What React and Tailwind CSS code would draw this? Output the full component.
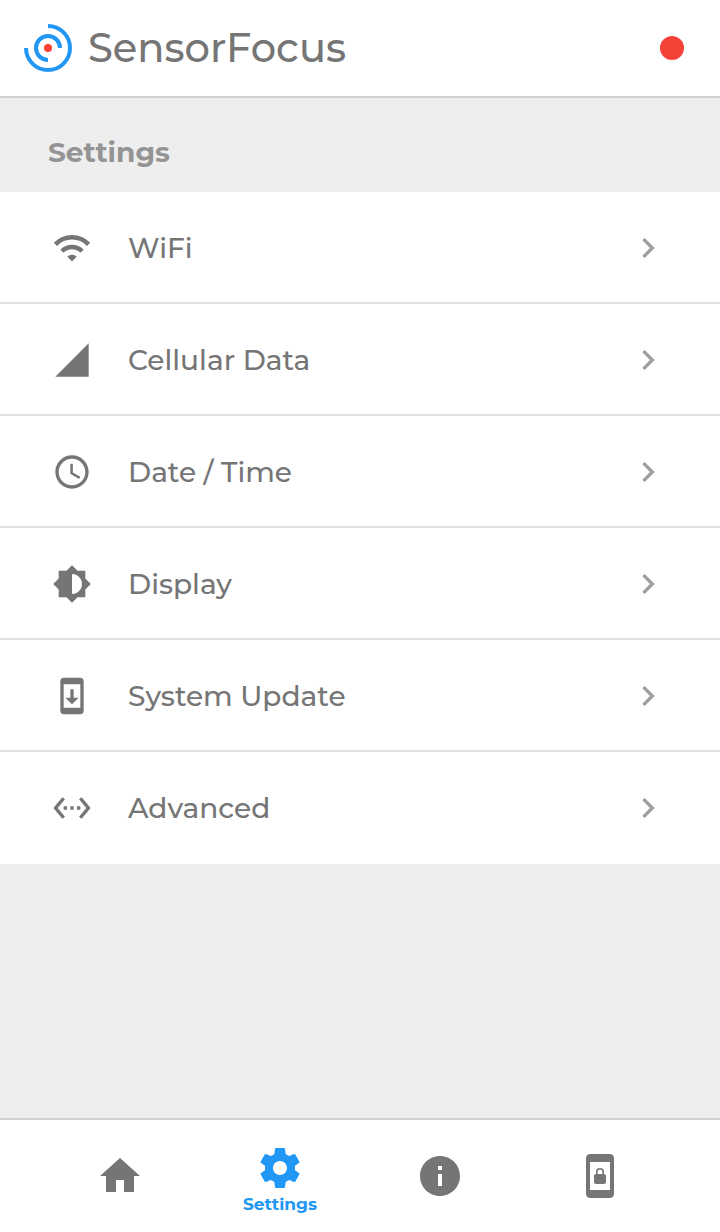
import {
  MdAccessTime,
  MdBrightness6,
  MdChevronRight,
  MdHome,
  MdInfo,
  MdScreenLockPortrait,
  MdSettingsEthernet,
  MdSignalCellular4Bar,
  MdSystemUpdate,
} from "react-icons/md";

function WifiIcon({ className }) {
  return (
    <svg viewBox="0 0 40 40" className={className} fill="none" stroke="currentColor" strokeWidth="4.5" aria-hidden="true">
      <path d="M3.4 16.4a23 23 0 0 1 33.2 0" />
      <path d="M9.9 23.2a14 14 0 0 1 20.2 0" />
      <path d="M15.3 28.6a6.6 6.6 0 0 1 9.4 0L20 33.4z" fill="currentColor" stroke="none" />
    </svg>
  );
}

function GearIcon({ className }) {
  return (
    <svg viewBox="0 0 24 24" className={className} fill="currentColor" aria-hidden="true">
      <path d="M19.43 12.98c.04-.32.07-.64.07-.98s-.03-.66-.07-.98l2.11-1.65c.19-.15.24-.42.12-.64l-2-3.46c-.12-.22-.39-.3-.61-.22l-2.49 1c-.52-.4-1.08-.73-1.69-.98l-.38-2.65C14.46 2.18 14.25 2 14 2h-4c-.25 0-.46.18-.49.42l-.38 2.65c-.61.25-1.17.59-1.69.98l-2.49-1c-.23-.09-.49 0-.61.22l-2 3.46c-.13.22-.07.49.12.64l2.11 1.65c-.04.32-.07.65-.07.98s.03.66.07.98l-2.11 1.65c-.19.15-.24.42-.12.64l2 3.46c.12.22.39.3.61.22l2.49-1c.52.4 1.08.73 1.69.98l.38 2.65c.03.24.24.42.49.42h4c.25 0 .46-.18.49-.42l.38-2.65c.61-.25 1.17-.59 1.69-.98l2.49 1c.23.09.49 0 .61-.22l2-3.46c.12-.22.07-.49-.12-.64l-2.11-1.65zM12 15.5c-1.93 0-3.5-1.57-3.5-3.5s1.57-3.5 3.5-3.5 3.5 1.57 3.5 3.5-1.57 3.5-3.5 3.5z" />
    </svg>
  );
}

function Logo() {
  return (
    <svg viewBox="0 0 48 48" className="size-12 shrink-0" fill="none" stroke="#2196f3" strokeWidth="4" aria-hidden="true">
      <path d="M24 2a22 22 0 1 1-22 22" />
      <path d="M24 36a12 12 0 1 1 12-12" />
      <circle cx="24" cy="24" r="4" fill="#f44336" stroke="none" />
    </svg>
  );
}

const rows = [
  { label: "WiFi", Icon: WifiIcon },
  { label: "Cellular Data", Icon: MdSignalCellular4Bar },
  { label: "Date / Time", Icon: MdAccessTime },
  { label: "Display", Icon: MdBrightness6 },
  { label: "System Update", Icon: MdSystemUpdate },
  { label: "Advanced", Icon: MdSettingsEthernet },
];

const tabs = [
  { label: "Home", Icon: MdHome },
  { label: "Settings", Icon: GearIcon, active: true },
  { label: "Information", Icon: MdInfo },
  { label: "Lock screen", Icon: MdScreenLockPortrait },
];

export default function App() {
  return (
    <div className="flex min-h-screen flex-col bg-[#eeeeee] font-['Montserrat','Inter',sans-serif] text-[#757575]">
      <header className="flex items-center justify-between border-b-2 border-[#d0d0d0] bg-white py-6 pr-9 pl-6">
        <div className="flex items-center gap-4">
          <Logo />
          <h1 className="text-[40px] leading-12 font-medium">SensorFocus</h1>
        </div>
        <span role="status" aria-label="Disconnected" className="size-6 rounded-full bg-[#f44336]" />
      </header>

      <main className="flex-1">
        <h2 className="px-12 pt-[38px] pb-6 text-[28px] leading-8 font-bold text-[#949494]">Settings</h2>
        <ul className="bg-white">
          {rows.map(({ label, Icon }) => (
            <li key={label} className="group">
              <button
                type="button"
                className="flex h-28 w-full items-center border-b-2 border-[#e0e0e0] px-13 pt-0.5 text-left group-last:border-white"
              >
                <Icon className="size-10 shrink-0" />
                <span className="ml-9 flex-1 text-[28px] leading-10 font-medium">{label}</span>
                <MdChevronRight className="size-10 shrink-0 text-[#9e9e9e]" />
              </button>
            </li>
          ))}
        </ul>
      </main>

      <nav className="grid grid-cols-4 border-t-2 border-[#d0d0d0] bg-white px-10" aria-label="Main">
        {tabs.map(({ label, Icon, active }) => (
          <button
            key={label}
            type="button"
            aria-label={label}
            aria-current={active ? "page" : undefined}
            className={
              active
                ? "flex h-28 flex-col items-center justify-center pt-2 text-[#2196f3]"
                : "flex h-28 flex-col items-center justify-center"
            }
          >
            <Icon className="size-12" />
            {active && <span className="text-[17px] leading-6 font-bold">{label}</span>}
          </button>
        ))}
      </nav>
    </div>
  );
}
